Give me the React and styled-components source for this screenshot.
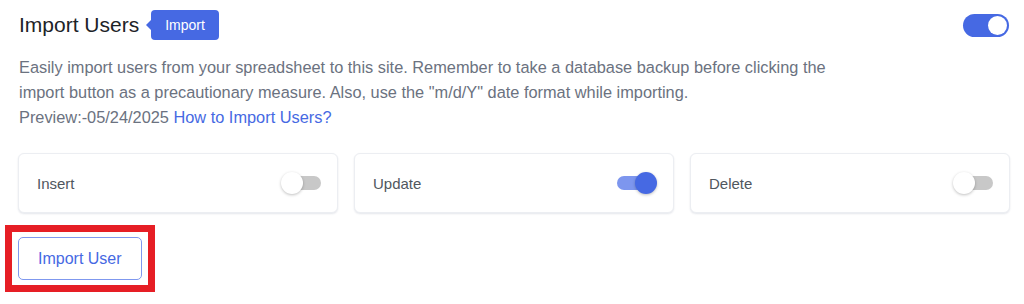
import React, { useState } from 'react'
import styled, { createGlobalStyle } from 'styled-components'

const GlobalStyle = createGlobalStyle`
  body {
    margin: 0;
    background: #ffffff;
    font-family: "Liberation Sans", Arial, sans-serif;
  }
`;

const Page = styled.div`
  width: 1024px;
  height: 304px;
  box-sizing: border-box;
  padding: 10px 14px 0 19px;
  background: #ffffff;
`;

const Header = styled.div`
  display: flex;
  align-items: center;
  justify-content: space-between;
  height: 30px;
`;

const TitleGroup = styled.div`
  display: flex;
  align-items: center;
  gap: 12px;
`;

const Title = styled.h2`
  margin: 0;
  font-size: 21px;
  font-weight: 400;
  color: #1d2327;
`;

const Badge = styled.span`
  position: relative;
  display: inline-flex;
  align-items: center;
  height: 30px;
  padding: 0 14px;
  border-radius: 4px;
  background: #4669e3;
  color: #ffffff;
  font-size: 14px;
  &::before {
    content: '';
    position: absolute;
    left: -5px;
    top: 50%;
    margin-top: -5px;
    border-top: 5px solid transparent;
    border-bottom: 5px solid transparent;
    border-right: 5px solid #4669e3;
  }
`;

const BigSwitch = styled.button`
  position: relative;
  width: 46px;
  height: 23px;
  margin-right: 1px;
  padding: 0;
  border: none;
  border-radius: 12px;
  background: ${p => (p.$on ? '#4669e3' : '#c4c4c4')};
  cursor: pointer;
  &::after {
    content: '';
    position: absolute;
    top: 2px;
    left: ${p => (p.$on ? '25px' : '2px')};
    width: 19px;
    height: 19px;
    border-radius: 50%;
    background: #ffffff;
  }
`;

const Description = styled.p`
  margin: 15px 0 0;
  max-width: 830px;
  font-size: 16.35px;
  line-height: 25px;
  color: #6b7280;
  a {
    color: #4669e3;
    text-decoration: none;
  }
`;

const Cards = styled.div`
  display: grid;
  grid-template-columns: repeat(3, 320px);
  gap: 16px;
  margin: 23px 0 0 -1px;
`;

const Card = styled.div`
  display: flex;
  align-items: center;
  justify-content: space-between;
  height: 60px;
  box-sizing: border-box;
  padding: 0 16px 0 18px;
  border: 1px solid #eceef2;
  border-radius: 6px;
  background: #ffffff;
  box-shadow: 0 1px 2px rgba(30, 50, 90, 0.12);
  font-size: 15px;
  color: #50575e;
`;

const Switch = styled.button`
  position: relative;
  width: 40px;
  height: 22px;
  padding: 0;
  border: none;
  background: transparent;
  cursor: pointer;
  &::before {
    content: '';
    position: absolute;
    top: 4px;
    left: ${p => (p.$on ? '0' : '4px')};
    width: 36px;
    height: 14px;
    border-radius: 7px;
    background: ${p => (p.$on ? '#7d96ee' : '#c8c8c8')};
  }
  &::after {
    content: '';
    position: absolute;
    top: 0;
    left: ${p => (p.$on ? '18px' : '0')};
    width: 22px;
    height: 22px;
    border-radius: 50%;
    background: ${p => (p.$on ? '#4669e3' : '#ffffff')};
    box-shadow: 0 1px 3px rgba(0, 0, 0, 0.25);
  }
`;

const Highlight = styled.div`
  display: inline-block;
  margin: 12px 0 0 -14px;
  padding: 5px 6px 5px 6px;
  border: 7px solid #e61e25;
`;

const ImportButton = styled.button`
  height: 43px;
  padding: 0 19px;
  border: 1px solid #7f98ef;
  border-radius: 5px;
  background: #ffffff;
  color: #4669e3;
  font-family: "Liberation Sans", Arial, sans-serif;
  font-size: 16px;
  cursor: pointer;
`;

const App = () => {
    const [enabled, setEnabled] = useState(true)
    const [modes, setModes] = useState({ Insert: false, Update: true, Delete: false })

    return (
        <Page>
            <GlobalStyle />
            <Header>
                <TitleGroup>
                    <Title>Import Users</Title>
                    <Badge>Import</Badge>
                </TitleGroup>
                <BigSwitch $on={enabled} onClick={() => setEnabled(!enabled)} aria-label="Enable import" />
            </Header>
            <Description>
                Easily import users from your spreadsheet to this site. Remember to take a database backup before clicking the
                import button as a precautionary measure. Also, use the "m/d/Y" date format while importing.
                <br />
                Preview:-05/24/2025 <a href="#">How to Import Users?</a>
            </Description>
            <Cards>
                {Object.keys(modes).map(name => (
                    <Card key={name}>
                        {name}
                        <Switch
                            $on={modes[name]}
                            aria-label={name}
                            onClick={() => setModes({ ...modes, [name]: !modes[name] })}
                        />
                    </Card>
                ))}
            </Cards>
            <Highlight>
                <ImportButton>Import User</ImportButton>
            </Highlight>
        </Page>
    );
};

export default App
